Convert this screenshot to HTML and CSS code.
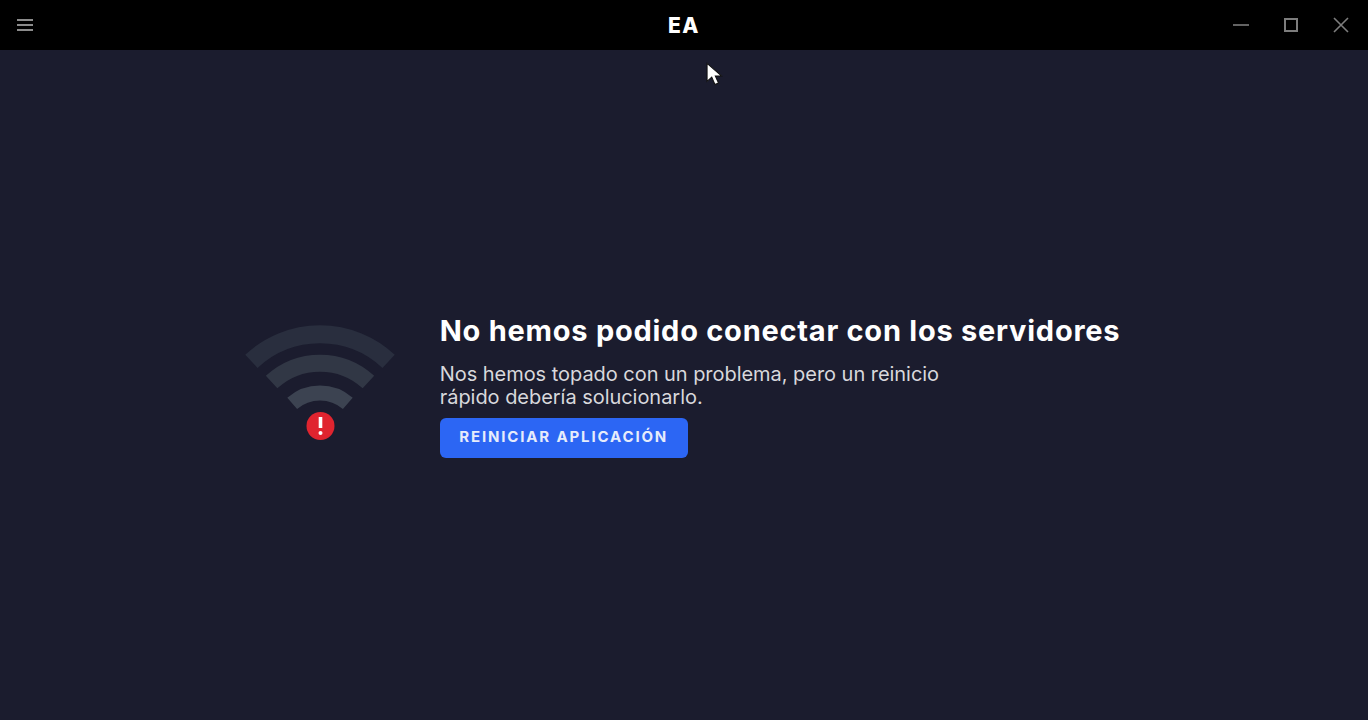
FILE: index.html
```html
<!DOCTYPE html>
<html lang="es">
<head>
  <meta charset="UTF-8">
  <meta name="viewport" content="width=device-width, initial-scale=1.0">
  <title>EA</title>
  <link rel="stylesheet" href="styles.css">
</head>
<body>

  <!-- Barra superior -->
  <header class="titlebar">
    <button class="bar-btn menu-btn" aria-label="Menú">
      <svg width="16" height="14" viewBox="0 0 16 14"><path d="M0 2h16M0 7h16M0 12h16" stroke="#8c8c8c" stroke-width="2" fill="none"/></svg>
    </button>
    <div class="logo">EA</div>
    <div class="window-btns">
      <button class="bar-btn" aria-label="Minimizar">
        <svg width="16" height="16" viewBox="0 0 16 16"><path d="M0 8h16" stroke="#7d7d7d" stroke-width="1.6" fill="none"/></svg>
      </button>
      <button class="bar-btn" aria-label="Maximizar">
        <svg width="14" height="14" viewBox="0 0 14 14"><rect x="1" y="1" width="12" height="12" stroke="#7d7d7d" stroke-width="2" fill="none"/></svg>
      </button>
      <button class="bar-btn" aria-label="Cerrar">
        <svg width="16" height="16" viewBox="0 0 16 16"><path d="M1 1l14 14M15 1L1 15" stroke="#7d7d7d" stroke-width="1.6" fill="none"/></svg>
      </button>
    </div>
  </header>

  <!-- Mensaje de error -->
  <main class="error-page">
    <div class="error-box">
      <svg class="wifi-icon" width="150" height="115" viewBox="245 325 150 115">
        <g fill="none" stroke-linecap="butt">
          <path d="M251.4 361.3A100.5 100.5 0 0 1 388.6 361.3" stroke="#292e3e" stroke-width="18"/>
          <path d="M271.6 382.1A71.5 71.5 0 0 1 368.4 382.1" stroke="#313745" stroke-width="17"/>
          <path d="M292.2 403.4A42.5 42.5 0 0 1 347.8 403.4" stroke="#3c4351" stroke-width="15"/>
        </g>
        <circle cx="320.5" cy="426" r="14" fill="#e0242f"/>
        <path d="M320.5 417v11" stroke="#fff" stroke-width="3.6" fill="none"/>
        <circle cx="320.5" cy="433" r="2" fill="#fff"/>
      </svg>
      <div class="error-text">
        <h1>No hemos podido conectar con los servidores</h1>
        <p>Nos hemos topado con un problema, pero un reinicio<br>rápido debería solucionarlo.</p>
        <button class="restart-btn">REINICIAR APLICACIÓN</button>
      </div>
    </div>
  </main>

  <!-- Puntero -->
  <svg class="cursor" width="17" height="26" viewBox="0 0 16 24">
    <path d="M1 1v17l4.400-4 3 7 3.400-1.500-3-6.500h6z" fill="#fff" stroke="#111" stroke-width="1"/>
  </svg>

</body>
</html>
```

FILE: styles.css
```css
html, body {
  height: 100%;
}

body {
  margin: 0;
  background: #1b1c2e;
  color: #fff;
  font-family: 'Inter', 'Liberation Sans', sans-serif;
  display: flex;
  flex-direction: column;
  overflow: hidden;
}

.titlebar {
  height: 50px;
  flex: none;
  background: #000;
  display: flex;
  align-items: center;
  justify-content: space-between;
  padding: 0 2px 0 17px;
  position: relative;
}

.bar-btn {
  background: none;
  border: 0;
  padding: 0;
  display: flex;
  align-items: center;
  justify-content: center;
}

.logo {
  position: absolute;
  left: 668px;
  top: 13px;
  font-size: 21px;
  line-height: 26px;
  font-weight: 800;
  letter-spacing: 1.5px;
}

.window-btns {
  display: flex;
  align-items: center;
}

.window-btns .bar-btn {
  width: 50px;
  height: 50px;
}

.error-page {
  flex: 1;
  display: flex;
  align-items: center;
  justify-content: center;
}

.error-box {
  display: flex;
  align-items: center;
  gap: 45px;
  margin: 0 0 0 -3px;
}

.wifi-icon {
  flex: none;
  margin-bottom: 6px;
}

.error-text h1 {
  margin: 0 0 14px;
  font-size: 29px;
  line-height: 36px;
  font-weight: 700;
  letter-spacing: 0.75px;
  white-space: nowrap;
}

.error-text p {
  margin: 0 0 9px;
  font-size: 20px;
  line-height: 23px;
  letter-spacing: -0.04px;
  color: #d8d8dc;
}

.restart-btn {
  display: block;
  width: 248px;
  height: 40px;
  padding-bottom: 3px;
  background: #2c66f4;
  color: #e6ecfb;
  border: 0;
  border-radius: 6px;
  font-family: inherit;
  font-size: 15px;
  font-weight: 700;
  letter-spacing: 1.85px;
}

.cursor {
  position: absolute;
  left: 706px;
  top: 62px;
}
```
